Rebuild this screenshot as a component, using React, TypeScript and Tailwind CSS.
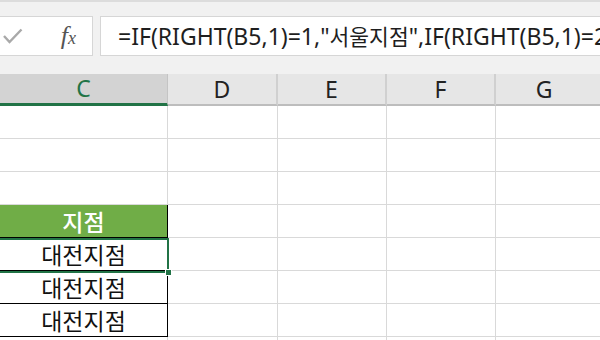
import React from "react";

const FONT = { fontFamily: '"Noto Sans", "Noto Sans CJK KR", sans-serif' };
const KFONT = { fontFamily: '"Noto Sans CJK KR", "Noto Sans", sans-serif' };

function Row({ c, kind }: { c?: string; kind?: "head" | "data" }) {
  const cBase = "w-[168px] shrink-0 flex items-center justify-center text-[23px] leading-none";
  let cCls = cBase + " border-r border-[#d9d9d9]";
  if (kind === "head") cCls = cBase + " bg-[#70ad47] text-white font-medium border-r border-black";
  if (kind === "data") cCls = cBase + " bg-white text-[#111] border-r border-black";
  return (
    <div className="flex h-[33px] shrink-0">
      <div className={cCls + (kind ? " border-b border-b-black" : " border-b border-b-[#d9d9d9]")} style={KFONT}>
        {c}
      </div>
      <div className="w-[110px] shrink-0 border-r border-b border-[#d9d9d9]" />
      <div className="w-[109px] shrink-0 border-r border-b border-[#d9d9d9]" />
      <div className="w-[109px] shrink-0 border-r border-b border-[#d9d9d9]" />
      <div className="flex-1 border-b border-[#d9d9d9]" />
    </div>
  );
}

export default function App() {
  return (
    <div className="relative w-[600px] h-[340px] overflow-hidden bg-white" style={FONT}>
      {/* formula bar */}
      <div className="h-[74px] bg-[#f1f1f1] border-t-2 border-[#dcdcdc] pt-[14px] flex gap-[7px]">
        <div className="w-[93px] h-[40px] bg-white border border-l-0 border-[#d6d6d6] flex items-center justify-between pl-[3px] pr-[16px]">
          <svg width="20" height="16" viewBox="0 0 20 16">
            <polyline points="1,8 6.5,14 18.5,1.5" fill="none" stroke="#a9a9a9" strokeWidth="2.4" />
          </svg>
          <span className="text-[#555] italic leading-none" style={{ fontFamily: '"Liberation Serif", serif' }}>
            <span className="text-[26px]">f</span>
            <span className="text-[18px]">x</span>
          </span>
        </div>
        <div className="flex-1 h-[40px] bg-white border border-r-0 border-[#d6d6d6] flex items-center pl-[17px] overflow-hidden">
          <span className="whitespace-nowrap text-[23px] text-[#1e1e1e] leading-none" style={FONT}>
            =IF(RIGHT(B5,1)=1,"<span className="text-[21.5px]" style={KFONT}>서울지점</span>",IF(RIGHT(B5,1)=2
          </span>
        </div>
      </div>
      {/* column headers */}
      <div className="flex h-[32px] bg-[#e6e6e6] text-[23px] leading-none">
        <div className="w-[168px] shrink-0 bg-[#d3d3d3] border-r border-[#c4c4c4] border-b-[3px] border-b-[#217346] flex items-center justify-center text-[#217346]">
          C
        </div>
        <div className="w-[110px] shrink-0 border-r-2 border-[#d0d0d0] border-b-2 border-b-[#bdbdbd] flex items-center justify-center text-[#222]">D</div>
        <div className="w-[109px] shrink-0 border-r-2 border-[#d0d0d0] border-b-2 border-b-[#bdbdbd] flex items-center justify-center text-[#222]">E</div>
        <div className="w-[109px] shrink-0 border-r-2 border-[#d0d0d0] border-b-2 border-b-[#bdbdbd] flex items-center justify-center text-[#222]">F</div>
        <div className="flex-1 border-b-2 border-b-[#bdbdbd] flex items-center justify-center text-[#222] pr-[8px]">G</div>
      </div>
      {/* grid */}
      <div className="flex flex-col">
        <Row />
        <Row />
        <Row />
        <Row c="지점" kind="head" />
        <Row c="대전지점" kind="data" />
        <Row c="대전지점" kind="data" />
        <Row c="대전지점" kind="data" />
        <Row />
      </div>
      {/* selection */}
      <div className="absolute left-[-4px] top-[238px] w-[173px] h-[35px] border-2 border-[#217346] pointer-events-none" />
      <div className="absolute left-[165px] top-[269px] w-[7px] h-[7px] bg-[#217346] border border-white" />
    </div>
  );
}
